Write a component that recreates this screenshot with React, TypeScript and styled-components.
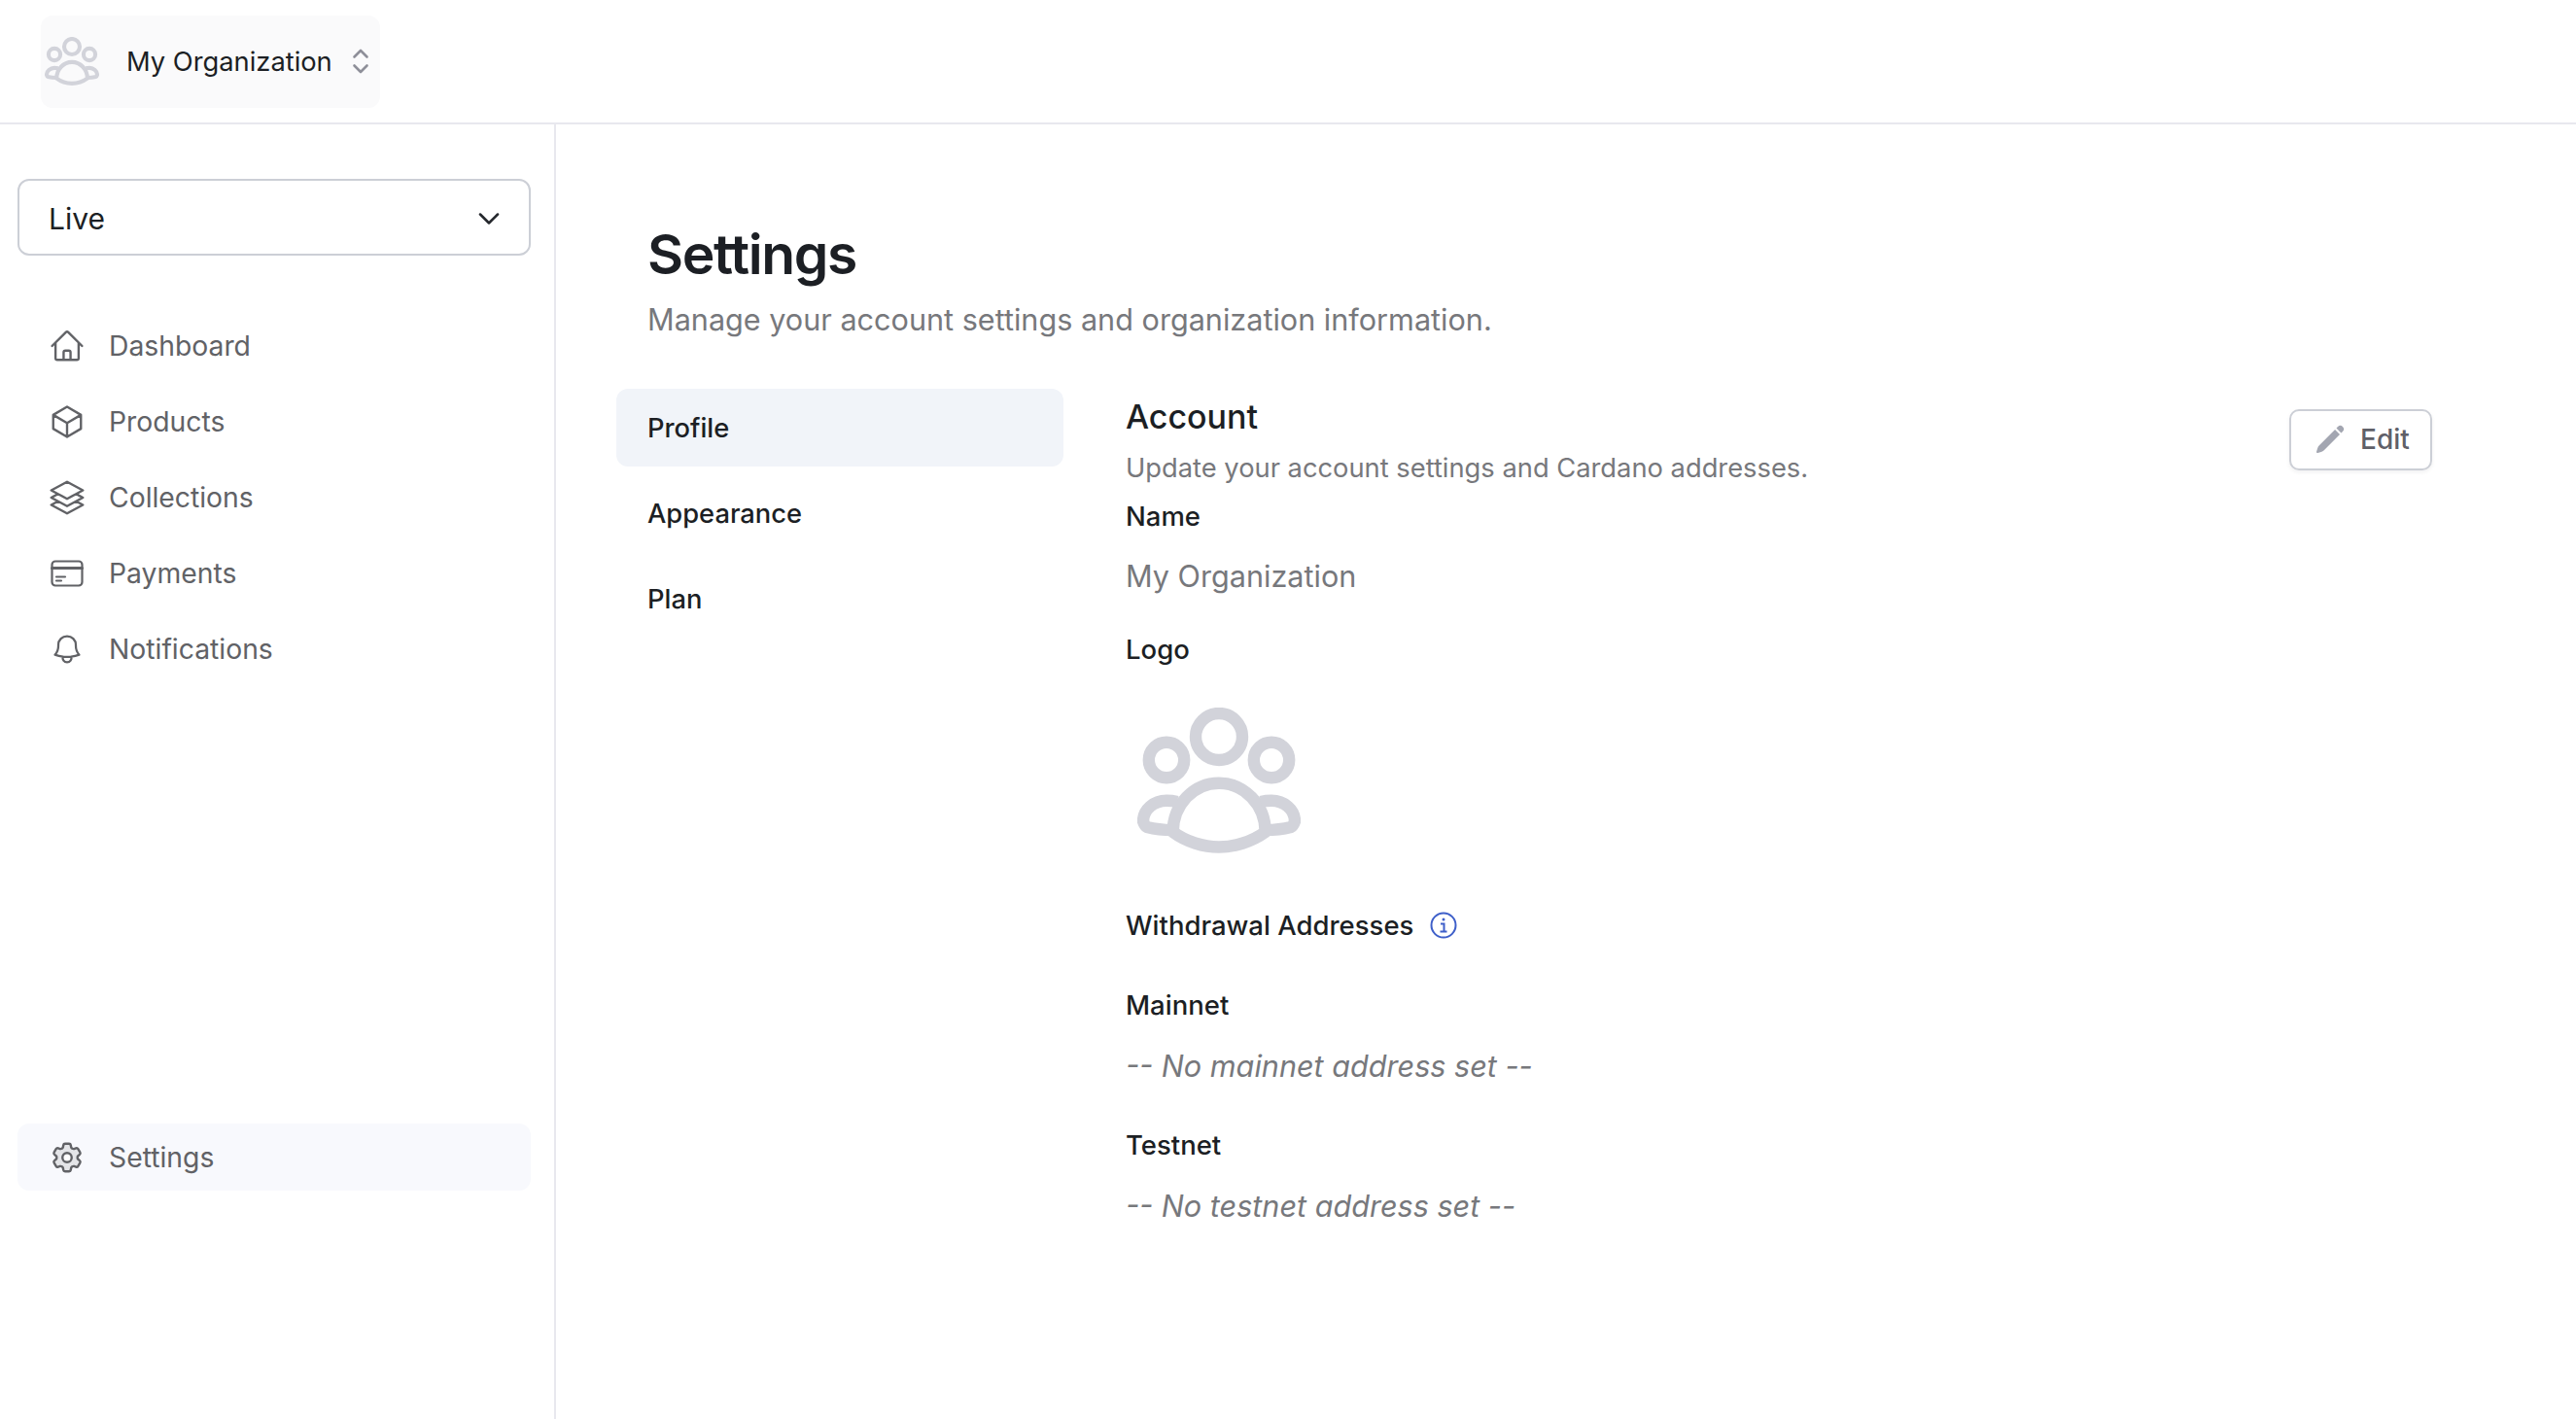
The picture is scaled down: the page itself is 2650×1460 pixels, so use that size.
import * as React from 'react';
import styled, { createGlobalStyle } from 'styled-components';
import { ChevronDown } from 'lucide-react';
import {
  HiOutlineBell,
  HiOutlineCog6Tooth,
  HiOutlineCube,
  HiOutlineHome,
  HiOutlineSquare3Stack3D,
  HiPencil,
} from 'react-icons/hi2';

// ------------------------------------
// Icons
// ------------------------------------

const OrgLogo = (props: { className?: string }) => (
  <svg className={props.className} viewBox="0 0 168 150" fill="none" stroke="#d2d3da" strokeWidth="12.4" strokeLinejoin="round">
    <circle cx="84" cy="30" r="24" />
    <circle cx="30" cy="54" r="18.2" />
    <circle cx="138" cy="54" r="18.2" />
    <path d="M36.7 128C36.7 100 58 77.7 84 77.7S131.7 100 131.7 128C118 138 100 143.500 84 143.500S50 138 36.700 128Z" />
    <path d="M41 97C37 96 33 95.700 30 95.700C17 95.700 6 105 6 117C7 120 8 122 10 123C18 125 27 126 36 126" />
    <path d="M127 97C131 96 135 95.700 138 95.700C151 95.700 162 105 162 117C161 120 160 122 158 123C150 125 141 126 132 126" />
  </svg>
);

const UpDownIcon = () => (
  <svg width="18" height="28" viewBox="0 0 18 28" fill="none" stroke="#8e8f99" strokeWidth="2.6" strokeLinecap="round" strokeLinejoin="round">
    <path d="M2.500 9.500 9 3l6.500 6.500" />
    <path d="M2.500 18.500 9 25l6.500-6.500" />
  </svg>
);

const CardIcon = () => (
  <svg width="34" height="34" viewBox="0 0 34 34" fill="none" stroke="currentColor" strokeWidth="2.200" strokeLinecap="round">
    <rect x="1.500" y="4.500" width="31" height="25" rx="3.500" />
    <path d="M1.500 11.500h31" strokeWidth="3" />
    <path d="M6 20.500h9M6 24.500h5" />
  </svg>
);

const InfoIcon = (props: { className?: string }) => (
  <svg className={props.className} width="28" height="28" viewBox="0 0 28 28" fill="none" stroke="#3e5fc9" strokeWidth="2">
    <circle cx="14" cy="14" r="12.500" />
    <path d="M11 12.500h3.500V20M10.500 20.500h7" />
    <circle cx="14" cy="8" r="1.500" fill="#3e5fc9" stroke="none" />
  </svg>
);

// ------------------------------------
// Data
// ------------------------------------

const navItems = [
  { label: 'Dashboard', icon: <HiOutlineHome size={38} /> },
  { label: 'Products', icon: <HiOutlineCube size={38} /> },
  { label: 'Collections', icon: <HiOutlineSquare3Stack3D size={40} /> },
  { label: 'Payments', icon: <CardIcon /> },
  { label: 'Notifications', icon: <HiOutlineBell size={36} /> },
];

const tabs = ['Profile', 'Appearance', 'Plan'];

// ------------------------------------
// Component
// ------------------------------------

export default function App() {
  return (
    <>
      <GlobalStyle />
      <StyledPage>
        <StyledHeader>
          <StyledOrgButton>
            <StyledOrgIcon />
            <StyledOrgName>My Organization</StyledOrgName>
            <UpDownIcon />
          </StyledOrgButton>
        </StyledHeader>
        <StyledBody>
          <StyledSidebar>
            <StyledSelect>
              Live
              <ChevronDown size={36} strokeWidth={1.700} color="#24272c" />
            </StyledSelect>
            <StyledNav>
              {navItems.map((item) => (
                <StyledNavItem key={item.label}>
                  <StyledNavIcon>{item.icon}</StyledNavIcon>
                  {item.label}
                </StyledNavItem>
              ))}
            </StyledNav>
            <StyledNavItem $active>
              <StyledNavIcon>
                <StyledGear size={38} />
              </StyledNavIcon>
              Settings
            </StyledNavItem>
          </StyledSidebar>
          <StyledMain>
            <StyledTitle>Settings</StyledTitle>
            <StyledSubtitle>Manage your account settings and organization information.</StyledSubtitle>
            <StyledColumns>
              <StyledTabs>
                {tabs.map((tab, i) => (
                  <StyledTab key={tab} $active={i === 0}>
                    {tab}
                  </StyledTab>
                ))}
              </StyledTabs>
              <StyledPanel>
                <StyledPanelHeader>
                  <div>
                    <StyledPanelTitle>Account</StyledPanelTitle>
                    <StyledPanelDesc>Update your account settings and Cardano addresses.</StyledPanelDesc>
                  </div>
                  <StyledEdit>
                    <HiPencil size={32} color="#a3a6b1" />
                    Edit
                  </StyledEdit>
                </StyledPanelHeader>
                <StyledLabel $top={13}>Name</StyledLabel>
                <StyledValue $top={22}>My Organization</StyledValue>
                <StyledLabel $top={35}>Logo</StyledLabel>
                <StyledLogo />
                <StyledLabel $top={56}>
                  Withdrawal Addresses
                  <StyledInfo />
                </StyledLabel>
                <StyledLabel $top={46}>Mainnet</StyledLabel>
                <StyledValue $top={23} $empty>
                  -- No mainnet address set --
                </StyledValue>
                <StyledLabel $top={41}>Testnet</StyledLabel>
                <StyledValue $top={23} $empty>
                  -- No testnet address set --
                </StyledValue>
              </StyledPanel>
            </StyledColumns>
          </StyledMain>
        </StyledBody>
      </StyledPage>
    </>
  );
}

// ------------------------------------
// Styles
// ------------------------------------

const GlobalStyle = createGlobalStyle`
  html, body {
    margin: 0;
    background: #fff;
    font-family: Inter, "Liberation Sans", sans-serif;
    color: #1c1f24;
  }
  * {
    box-sizing: border-box;
  }
`;

const StyledPage = styled.div`
  display: flex;
  flex-direction: column;
  height: 1460px;
`;

const StyledHeader = styled.header`
  display: flex;
  align-items: center;
  height: 128px;
  padding: 0 0 0 42px;
  border-bottom: 2px solid #e8e8ee;
`;

const StyledOrgButton = styled.div`
  display: flex;
  align-items: center;
  width: 349px;
  height: 95px;
  padding-left: 4px;
  background: #fafafb;
  border-radius: 12px;
`;

const StyledOrgIcon = styled(OrgLogo)`
  width: 56px;
  height: 50px;
  margin-right: 28px;
`;

const StyledOrgName = styled.span`
  margin-right: 20px;
  font-size: 27.300px;
`;

const StyledBody = styled.div`
  display: flex;
  flex: 1;
  min-height: 0;
`;

const StyledSidebar = styled.aside`
  display: flex;
  flex-direction: column;
  width: 572px;
  padding: 56px 24px 235px 18px;
  border-right: 2px solid #e8e8ee;
`;

const StyledSelect = styled.div`
  display: flex;
  align-items: center;
  justify-content: space-between;
  height: 79px;
  padding: 2px 23px 0 30px;
  border: 2px solid #cccfd6;
  border-radius: 12px;
  font-size: 30px;
`;

const StyledNav = styled.nav`
  display: flex;
  flex: 1;
  flex-direction: column;
  gap: 9px;
  margin-top: 58px;
`;

const StyledNavItem = styled.div<{ $active?: boolean }>`
  display: flex;
  align-items: center;
  height: 69px;
  padding-left: 31px;
  border-radius: 12px;
  background: ${(p) => (p.$active ? '#f8f9fd' : 'transparent')};
  color: #616266;
  font-size: 28.300px;
`;

const StyledNavIcon = styled.span`
  display: flex;
  align-items: center;
  justify-content: center;
  width: 40px;
  margin-right: 23px;
`;

const StyledGear = styled(HiOutlineCog6Tooth)`
  fill: #e4e5e8;

  path:last-child {
    fill: #fff;
  }
`;

const StyledMain = styled.main`
  flex: 1;
  padding: 100px 148px 0 62px;
`;

const StyledTitle = styled.h1`
  margin: 0 0 0 32px;
  font-size: 57px;
  font-weight: 600;
  line-height: 68px;
  letter-spacing: -1.400px;
`;

const StyledSubtitle = styled.p`
  margin: 13px 0 0 32px;
  color: #77787c;
  font-size: 30.600px;
  line-height: 40px;
`;

const StyledColumns = styled.div`
  display: flex;
  gap: 64px;
  margin-top: 51px;
`;

const StyledTabs = styled.div`
  display: flex;
  flex-direction: column;
  flex: none;
  gap: 8px;
  width: 460px;
`;

const StyledTab = styled.div<{ $active?: boolean }>`
  display: flex;
  align-items: center;
  height: 80px;
  padding-left: 32px;
  border-radius: 12px;
  background: ${(p) => (p.$active ? '#f1f4f9' : 'transparent')};
  font-size: 27.300px;
  font-weight: 450;
`;

const StyledPanel = styled.section`
  flex: 1;
  padding-top: 7px;
`;

const StyledPanelHeader = styled.div`
  display: flex;
  align-items: center;
  justify-content: space-between;
`;

const StyledPanelTitle = styled.h2`
  margin: 0;
  font-size: 34px;
  font-weight: 500;
  line-height: 44px;
`;

const StyledPanelDesc = styled.p`
  margin: 13px 0 0;
  color: #77787c;
  font-size: 27.300px;
  line-height: 36px;
`;

const StyledEdit = styled.div`
  display: flex;
  align-items: center;
  gap: 15px;
  width: 147px;
  height: 63px;
  margin-top: -3px;
  padding-left: 24px;
  border: 2px solid #cccfd6;
  border-radius: 10px;
  box-shadow: 0 2px 4px rgba(20, 20, 40, 0.06);
  color: #5f6068;
  font-size: 28px;
  font-weight: 450;
`;

const StyledLabel = styled.div<{ $top: number }>`
  display: flex;
  align-items: center;
  height: 36px;
  margin-top: ${(p) => p.$top}px;
  font-size: 27.500px;
  font-weight: 450;
`;

const StyledValue = styled.div<{ $top: number; $empty?: boolean }>`
  margin-top: ${(p) => p.$top}px;
  color: #77787c;
  font-size: 30.600px;
  font-style: ${(p) => (p.$empty ? 'italic' : 'normal')};
  line-height: 44px;
`;

const StyledLogo = styled(OrgLogo)`
  display: block;
  width: 168px;
  height: 150px;
  margin: 42px 0 0 12px;
`;

const StyledInfo = styled(InfoIcon)`
  margin-left: 17px;
`;
